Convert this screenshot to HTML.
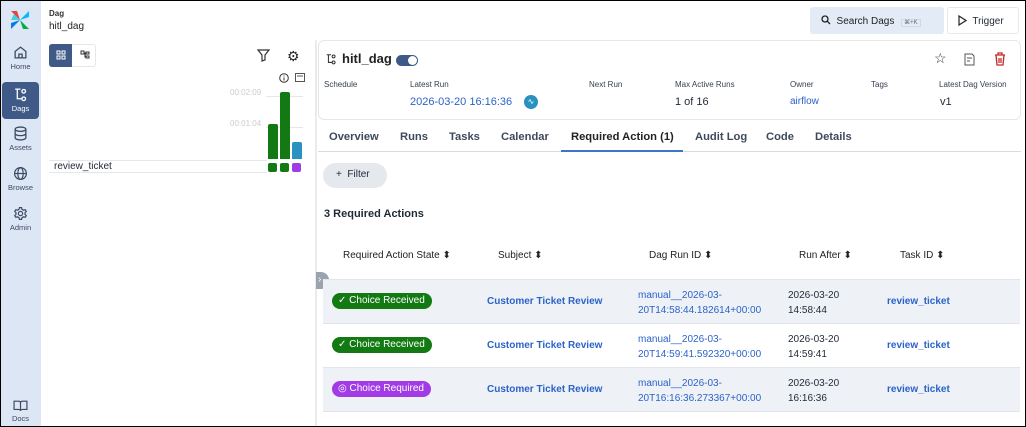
<!DOCTYPE html>
<html><head><style>
*{box-sizing:border-box;margin:0;padding:0}
body{width:1026px;height:427px;overflow:hidden;font-family:"Liberation Sans",sans-serif;color:#1f2937;background:#fff;position:relative;font-size:11px}
.frame{position:absolute;inset:0;border:1px solid #000;pointer-events:none;z-index:10}
.side{position:absolute;left:0;top:0;width:41px;height:427px;background:#dde6f4}
.nav{position:absolute;left:2px;width:37px;text-align:center;font-size:7.5px;color:#3b4a63}
.nav svg{display:block;margin:0 auto 2px}
.abs{position:absolute}
.lab{font-size:8px;color:#374151}
.val{font-size:11px}
.link{color:#2b63c9}
.tab{position:absolute;top:131px;font-size:11.2px;font-weight:bold;color:#3d4a5c}
.th{position:absolute;top:250px;font-size:10px;color:#222}
.row{position:absolute;left:323px;width:697px;height:44px;border-bottom:1px solid #e2e6ec}
.pill{position:absolute;left:9px;top:13px;height:16px;border-radius:8px;color:#fff;font-size:10px;padding:2px 7px 0 6px}
.c{position:absolute;font-size:10px}
.b{font-weight:bold;color:#2b63c9}
</style></head><body>
<div class="side">
 <svg class="abs" style="left:8px;top:8px" width="24" height="24" viewBox="0 0 24 24"><path d="M12 12 L3 3 L9 3Z" fill="#e2463f"/><path d="M12 12 L21 3 L21 9Z" fill="#0cb6ff"/><path d="M12 12 L21 21 L15 21Z" fill="#00ad46"/><path d="M12 12 L3 21 L3 15Z" fill="#017cee"/><path d="M12 12L6 6 3 12Z" fill="#00c7d4" opacity=".7"/></svg>
 <div class="nav" style="top:45px"><svg width="15" height="15" viewBox="0 0 14 14" fill="none" stroke="#3b4a63" stroke-width="1.2"><path d="M2 6L7 2l5 4v6H2z"/><path d="M5.5 12V8.5h3V12"/></svg>Home</div>
 <div class="nav" style="top:82px;height:37px;background:#3f5a86;border-radius:4px;color:#fff;padding-top:5px"><svg width="15" height="15" viewBox="0 0 14 14" fill="none" stroke="#fff" stroke-width="1.2"><path d="M2 2h5M4 2v9h4"/><circle cx="10" cy="4" r="1.7"/><circle cx="10" cy="11" r="1.7"/></svg>Dags</div>
 <div class="nav" style="top:126px"><svg width="15" height="15" viewBox="0 0 14 14" fill="none" stroke="#3b4a63" stroke-width="1.2"><ellipse cx="7" cy="3" rx="5" ry="2"/><path d="M2 3v8c0 1 2 2 5 2s5-1 5-2V3M2 7c0 1 2 2 5 2s5-1 5-2"/></svg>Assets</div>
 <div class="nav" style="top:166px"><svg width="15" height="15" viewBox="0 0 14 14" fill="none" stroke="#3b4a63" stroke-width="1.1"><circle cx="7" cy="7" r="5.5"/><ellipse cx="7" cy="7" rx="2.5" ry="5.5"/><path d="M1.5 7h11"/></svg>Browse</div>
 <div class="nav" style="top:206px"><svg width="15" height="15" viewBox="0 0 14 14" fill="none" stroke="#3b4a63" stroke-width="1.1"><circle cx="7" cy="7" r="2"/><path d="M6 1.5h2l.4 1.6 1.4.8 1.6-.5 1 1.7-1.2 1.2v1.4l1.2 1.2-1 1.7-1.6-.5-1.4.8L8 12.5H6l-.4-1.6-1.4-.8-1.6.5-1-1.7 1.2-1.2V6.3L1.6 5.1l1-1.7 1.6.5 1.4-.8z"/></svg>Admin</div>
 <div class="nav" style="top:399px"><svg width="15" height="13" viewBox="0 0 14 12" fill="none" stroke="#3b4a63" stroke-width="1.1"><path d="M1 2h4c1 0 2 .5 2 1.5V11c0-.8-1-1.3-2-1.3H1zM13 2H9c-1 0-2 .5-2 1.5V11c0-.8 1-1.3 2-1.3h4z"/></svg>Docs</div>
</div>
<div class="abs" style="left:49px;top:9px;font-size:8px;font-weight:bold;color:#333">Dag</div>
<div class="abs" style="left:49px;top:21px;font-size:10px;color:#222">hitl_dag</div>
<div class="abs" style="left:810px;top:7px;width:134px;height:27px;background:#e3ebf6;border-radius:3px;font-size:10px;color:#222;padding:8px 0 0 11px"><svg width="10" height="10" viewBox="0 0 10 10" style="vertical-align:-1px" fill="none" stroke="#222" stroke-width="1.3"><circle cx="4" cy="4" r="3"/><path d="M6.3 6.3L9 9"/></svg>&nbsp; Search Dags <span style="font-size:6px;color:#667;border:1px solid #cdd;padding:0 2px;margin-left:4px">⌘+K</span></div>
<div class="abs" style="left:947px;top:7px;width:72px;height:27px;border:1px solid #e5e7eb;border-radius:3px;font-size:10px;padding:7px 0 0 10px"><svg width="9" height="11" viewBox="0 0 9 11" fill="none" stroke="#222" stroke-width="1.2" style="vertical-align:-2px"><path d="M1 1l7 4.5L1 10z"/></svg>&nbsp; Trigger</div>
<div class="abs" style="left:49px;top:44px;width:47px;height:23px;border:1px solid #e5e7eb;border-radius:3px"><div style="width:23px;height:23px;margin:-1px;background:#3f5a86;border-radius:3px 0 0 3px"></div></div>
<svg class="abs" style="left:56px;top:50px" width="10" height="10" viewBox="0 0 10 10" fill="none" stroke="#fff"><rect x="1" y="1" width="3" height="3"/><rect x="6" y="1" width="3" height="3"/><rect x="1" y="6" width="3" height="3"/><rect x="6" y="6" width="3" height="3"/></svg>
<svg class="abs" style="left:80px;top:50px" width="10" height="10" viewBox="0 0 10 10" fill="none" stroke="#333"><rect x="1" y="1" width="3" height="3"/><rect x="6" y="2" width="3" height="2"/><rect x="6" y="6" width="3" height="2"/><path d="M4 3h2M5 3v4h1"/></svg>
<svg class="abs" style="left:257px;top:49px" width="13" height="13" viewBox="0 0 13 13" fill="none" stroke="#333" stroke-width="1.2"><path d="M1 1h11L8 6v5L5 12V6z"/></svg>
<div class="abs" style="left:287px;top:48px;font-size:14px;color:#222">⚙</div>
<svg class="abs" style="left:279px;top:73px" width="10" height="10" viewBox="0 0 10 10" fill="none" stroke="#333"><circle cx="5" cy="5" r="4.3"/><path d="M5 4.5v3M5 2.5v1"/></svg>
<svg class="abs" style="left:295px;top:73px" width="10" height="9" viewBox="0 0 10 9" fill="none" stroke="#555"><rect x=".5" y=".5" width="9" height="8"/><path d="M2 3h6"/></svg>
<div class="abs" style="left:230px;top:88px;font-size:8px;color:#ccc">00:02:09</div>
<div class="abs" style="left:230px;top:119px;font-size:8px;color:#ccc">00:01:04</div>
<div class="abs" style="left:266px;top:96px;width:37px;border-top:1px solid #e5e7eb"></div>
<div class="abs" style="left:266px;top:127px;width:37px;border-top:1px solid #e5e7eb"></div>
<div class="abs" style="left:268px;top:124px;width:10px;height:35px;background:#137a13;border-radius:2px 2px 0 0"></div>
<div class="abs" style="left:280px;top:92px;width:10px;height:67px;background:#137a13;border-radius:2px 2px 0 0"></div>
<div class="abs" style="left:292px;top:142px;width:10px;height:17px;background:#2a92c0;border-radius:2px 2px 0 0"></div>
<div class="abs" style="left:49px;top:160px;width:218px;height:13px;border-top:1px solid #e5e7eb;border-bottom:1px solid #e5e7eb;font-size:10px;padding-left:5px">review_ticket</div>
<div class="abs" style="left:268px;top:163px;width:9px;height:9px;background:#137a13;border-radius:2px"></div>
<div class="abs" style="left:280px;top:163px;width:9px;height:9px;background:#137a13;border-radius:2px"></div>
<div class="abs" style="left:292px;top:163px;width:9px;height:9px;background:#a13be6;border-radius:2px"></div>
<div class="abs" style="left:315px;top:40px;width:2px;height:387px;background:#e9ebee"></div>
<div class="abs" style="left:316px;top:272px;width:13px;height:17px;background:#9aa3ae;border-radius:0 8px 8px 0;color:#fff;font-size:10px;padding:2px 0 0 2px">›</div>
<div class="abs" style="left:318px;top:40px;width:703px;height:80px;border:1px solid #e5e7eb;border-radius:6px"></div>
<svg class="abs" style="left:325px;top:53px" width="12" height="12" viewBox="0 0 14 14" fill="none" stroke="#333" stroke-width="1.2"><path d="M2 2h5M4 2v9h4"/><circle cx="10" cy="4" r="1.7"/><circle cx="10" cy="11" r="1.7"/></svg>
<div class="abs" style="left:342px;top:51px;font-size:13px;font-weight:bold;color:#222">hitl_dag</div>
<div class="abs" style="left:396px;top:55px;width:22px;height:11px;background:#3f5a86;border-radius:6px"><div style="position:absolute;right:1px;top:1px;width:9px;height:9px;background:#fff;border-radius:50%"></div></div>
<div class="abs" style="left:934px;top:50px;font-size:14px;color:#333">☆</div>
<svg class="abs" style="left:964px;top:53px" width="11" height="13" viewBox="0 0 11 13" fill="none" stroke="#555"><path d="M1 1h7l2 2v9H1z M3 5h5M3 8h3"/></svg>
<svg class="abs" style="left:994px;top:52px" width="12" height="14" viewBox="0 0 12 14" fill="none" stroke="#c62828" stroke-width="1.3"><path d="M1 3h10M4 3V1h4v2M2 3l1 10h6l1-10M5 6v5M7 6v5"/></svg>
<div class="abs lab" style="left:324px;top:80px">Schedule</div>
<div class="abs lab" style="left:410px;top:80px">Latest Run</div>
<div class="abs lab" style="left:589px;top:80px">Next Run</div>
<div class="abs lab" style="left:675px;top:80px">Max Active Runs</div>
<div class="abs lab" style="left:790px;top:80px">Owner</div>
<div class="abs lab" style="left:871px;top:80px">Tags</div>
<div class="abs lab" style="left:939px;top:80px">Latest Dag Version</div>
<div class="abs val link" style="left:410px;top:96px">2026-03-20 16:16:36</div>
<div class="abs" style="left:524px;top:95px;width:14px;height:14px;border-radius:50%;background:#2a92c0;color:#fff;font-size:8px;text-align:center;line-height:14px">∿</div>
<div class="abs val" style="left:675px;top:96px">1 of 16</div>
<div class="abs link" style="left:790px;top:96px;font-size:10px">airflow</div>
<div class="abs val" style="left:940px;top:96px">v1</div>
<div class="tab" style="left:329px">Overview</div>
<div class="tab" style="left:400px">Runs</div>
<div class="tab" style="left:449px">Tasks</div>
<div class="tab" style="left:501px">Calendar</div>
<div class="tab" style="left:571px;color:#222">Required Action (1)</div>
<div class="tab" style="left:695px">Audit Log</div>
<div class="tab" style="left:766px">Code</div>
<div class="tab" style="left:815px">Details</div>
<div class="abs" style="left:318px;top:151px;width:703px;border-top:1px solid #d8dde4"></div>
<div class="abs" style="left:561px;top:150px;width:122px;height:2px;background:#3b76c8"></div>
<div class="abs" style="left:323px;top:163px;width:64px;height:25px;background:#e5e8ed;border-radius:13px;font-size:10px;padding:6px 0 0 13px">+ &nbsp;Filter</div>
<div class="abs" style="left:324px;top:208px;font-size:11px;font-weight:bold">3 Required Actions</div>
<div class="th" style="left:343px">Required Action State ⬍</div>
<div class="th" style="left:498px">Subject ⬍</div>
<div class="th" style="left:649px">Dag Run ID ⬍</div>
<div class="th" style="left:799px">Run After ⬍</div>
<div class="th" style="left:900px">Task ID ⬍</div>
<div class="abs" style="left:323px;top:279px;width:697px;border-top:1px solid #e2e6ec"></div>
<div class="row" style="top:280px;background:#eef1f6"><div class="pill" style="background:#137a13">✓ Choice Received</div><div class="c b" style="left:164px;top:16px">Customer Ticket Review</div><div class="c link" style="left:315px;top:8px;line-height:15px">manual__2026-03-<br>20T14:58:44.182614+00:00</div><div class="c" style="left:465px;top:8px;line-height:15px">2026-03-20<br>14:58:44</div><div class="c b" style="left:564px;top:16px">review_ticket</div></div>
<div class="row" style="top:324px"><div class="pill" style="background:#137a13">✓ Choice Received</div><div class="c b" style="left:164px;top:16px">Customer Ticket Review</div><div class="c link" style="left:315px;top:8px;line-height:15px">manual__2026-03-<br>20T14:59:41.592320+00:00</div><div class="c" style="left:465px;top:8px;line-height:15px">2026-03-20<br>14:59:41</div><div class="c b" style="left:564px;top:16px">review_ticket</div></div>
<div class="row" style="top:368px;background:#eef1f6"><div class="pill" style="background:#a13be6">◎ Choice Required</div><div class="c b" style="left:164px;top:16px">Customer Ticket Review</div><div class="c link" style="left:315px;top:8px;line-height:15px">manual__2026-03-<br>20T16:16:36.273367+00:00</div><div class="c" style="left:465px;top:8px;line-height:15px">2026-03-20<br>16:16:36</div><div class="c b" style="left:564px;top:16px">review_ticket</div></div>
<div class="frame"></div>
</body></html>
